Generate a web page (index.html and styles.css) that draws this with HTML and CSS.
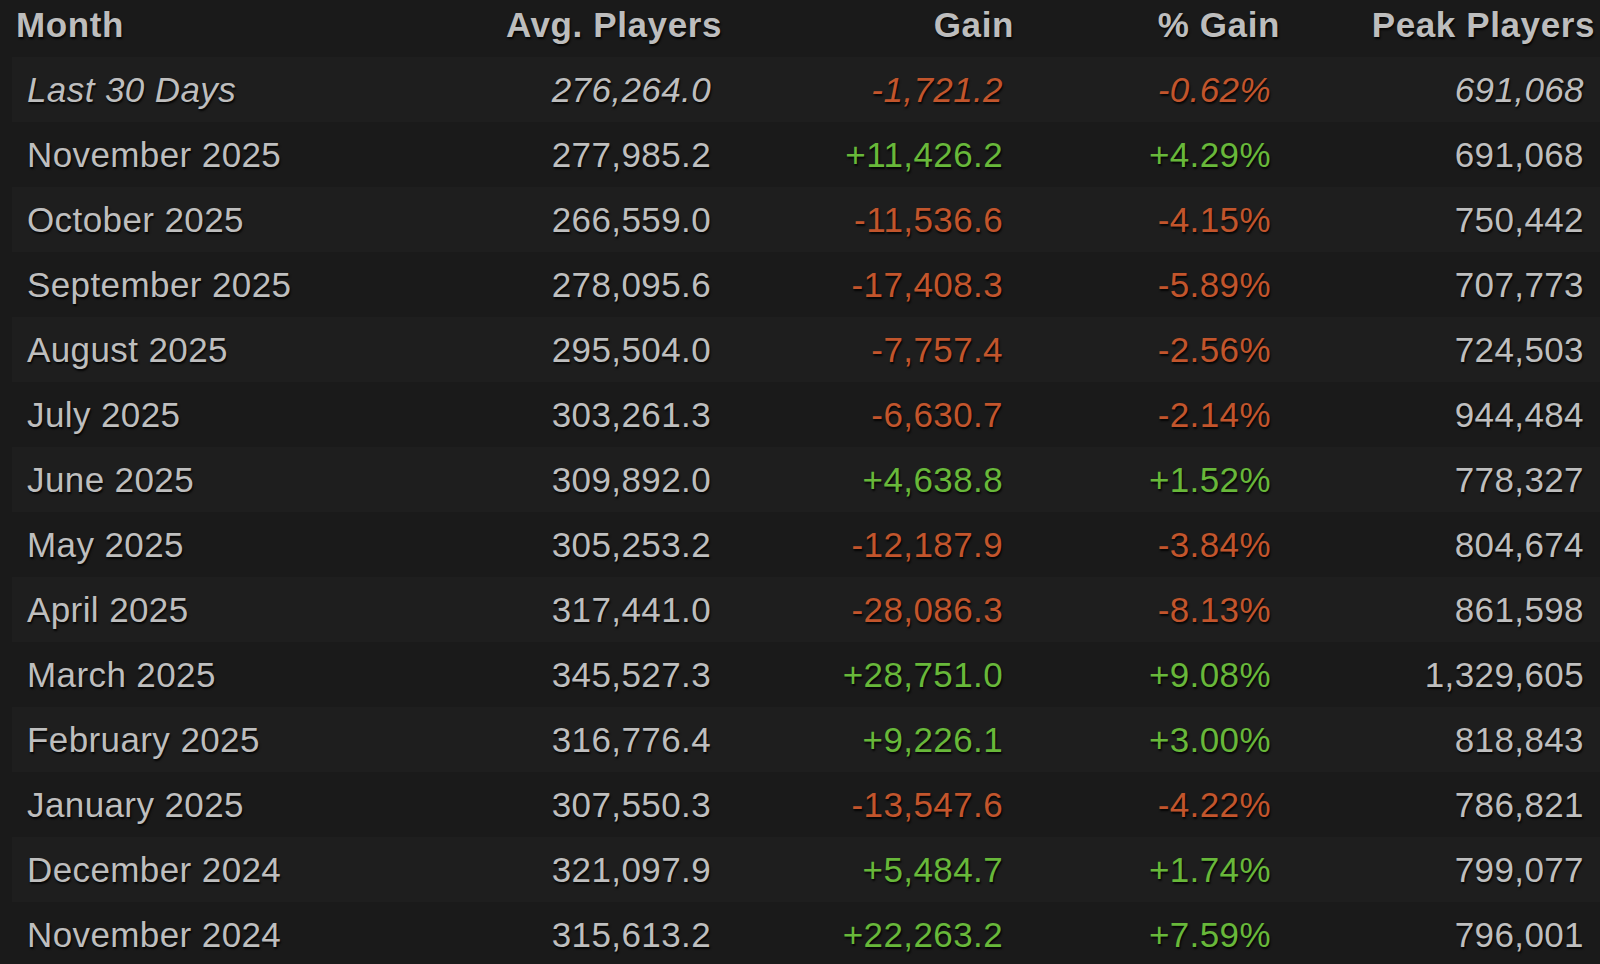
FILE: index.html
```html
<!DOCTYPE html>
<html>
<head>
<meta charset="utf-8">
<link rel="stylesheet" href="styles.css">
</head>
<body>
<div class="table">
  <div class="head">
    <div class="c0">Month</div>
    <div class="num">Avg. Players</div>
    <div class="num">Gain</div>
    <div class="num">% Gain</div>
    <div class="num">Peak Players</div>
  </div>
  <div class="row odd italic">
    <div class="c0">Last 30 Days</div>
    <div class="num">276,264.0</div>
    <div class="num neg">-1,721.2</div>
    <div class="num neg">-0.62%</div>
    <div class="num">691,068</div>
  </div>
  <div class="row">
    <div class="c0">November 2025</div>
    <div class="num">277,985.2</div>
    <div class="num pos">+11,426.2</div>
    <div class="num pos">+4.29%</div>
    <div class="num">691,068</div>
  </div>
  <div class="row odd">
    <div class="c0">October 2025</div>
    <div class="num">266,559.0</div>
    <div class="num neg">-11,536.6</div>
    <div class="num neg">-4.15%</div>
    <div class="num">750,442</div>
  </div>
  <div class="row">
    <div class="c0">September 2025</div>
    <div class="num">278,095.6</div>
    <div class="num neg">-17,408.3</div>
    <div class="num neg">-5.89%</div>
    <div class="num">707,773</div>
  </div>
  <div class="row odd">
    <div class="c0">August 2025</div>
    <div class="num">295,504.0</div>
    <div class="num neg">-7,757.4</div>
    <div class="num neg">-2.56%</div>
    <div class="num">724,503</div>
  </div>
  <div class="row">
    <div class="c0">July 2025</div>
    <div class="num">303,261.3</div>
    <div class="num neg">-6,630.7</div>
    <div class="num neg">-2.14%</div>
    <div class="num">944,484</div>
  </div>
  <div class="row odd">
    <div class="c0">June 2025</div>
    <div class="num">309,892.0</div>
    <div class="num pos">+4,638.8</div>
    <div class="num pos">+1.52%</div>
    <div class="num">778,327</div>
  </div>
  <div class="row">
    <div class="c0">May 2025</div>
    <div class="num">305,253.2</div>
    <div class="num neg">-12,187.9</div>
    <div class="num neg">-3.84%</div>
    <div class="num">804,674</div>
  </div>
  <div class="row odd">
    <div class="c0">April 2025</div>
    <div class="num">317,441.0</div>
    <div class="num neg">-28,086.3</div>
    <div class="num neg">-8.13%</div>
    <div class="num">861,598</div>
  </div>
  <div class="row">
    <div class="c0">March 2025</div>
    <div class="num">345,527.3</div>
    <div class="num pos">+28,751.0</div>
    <div class="num pos">+9.08%</div>
    <div class="num">1,329,605</div>
  </div>
  <div class="row odd">
    <div class="c0">February 2025</div>
    <div class="num">316,776.4</div>
    <div class="num pos">+9,226.1</div>
    <div class="num pos">+3.00%</div>
    <div class="num">818,843</div>
  </div>
  <div class="row">
    <div class="c0">January 2025</div>
    <div class="num">307,550.3</div>
    <div class="num neg">-13,547.6</div>
    <div class="num neg">-4.22%</div>
    <div class="num">786,821</div>
  </div>
  <div class="row odd">
    <div class="c0">December 2024</div>
    <div class="num">321,097.9</div>
    <div class="num pos">+5,484.7</div>
    <div class="num pos">+1.74%</div>
    <div class="num">799,077</div>
  </div>
  <div class="row">
    <div class="c0">November 2024</div>
    <div class="num">315,613.2</div>
    <div class="num pos">+22,263.2</div>
    <div class="num pos">+7.59%</div>
    <div class="num">796,001</div>
  </div>
</div>
</body>
</html>
```
FILE: styles.css
```css
html, body {
  margin: 0;
  padding: 0;
  background: #1a1a1a;
  overflow: hidden;
}
body {
  width: 1600px;
  height: 964px;
  font-family: "Liberation Sans", Arial, sans-serif;
  font-size: 35px;
  color: #bebebe;
  text-shadow: 1px 2px 2px rgba(0, 0, 0, 0.85);
}
.table {
  display: flex;
  flex-direction: column;
}
.head {
  display: grid;
  grid-template-columns: 300px 406px 292px 266px 315px;
  padding: 0 5px 7px 16px;
  height: 50px;
  line-height: 50px;
  font-weight: bold;
  color: #bdbdbd;
  letter-spacing: 0.6px;
}
.row {
  display: grid;
  grid-template-columns: 300px 384px 292px 268px 313px;
  margin-left: 12px;
  padding: 0 16px 0 15px;
  height: 65px;
  line-height: 65px;
  letter-spacing: 0.4px;
}
.row.odd {
  background: #1e1e1e;
}
.italic {
  font-style: italic;
}
.c0 {
  white-space: nowrap;
}
.num {
  text-align: right;
  white-space: nowrap;
}
.pos {
  color: #68b83a;
}
.neg {
  color: #c2552c;
}
```
